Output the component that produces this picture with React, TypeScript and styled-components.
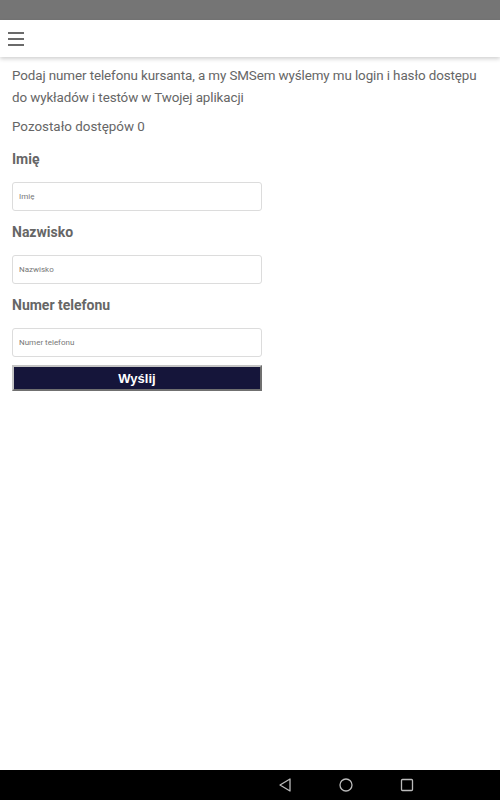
import React from "react";
import styled, { createGlobalStyle } from "styled-components";

const Global = createGlobalStyle`
  html, body { margin: 0; padding: 0; background: #fff; }
  body { font-family: Roboto, "Noto Sans", sans-serif; }
  #root { height: 800px; }
`;

const Screen = styled.div`
  width: 500px;
  height: 800px;
  display: flex;
  flex-direction: column;
  overflow: hidden;
`;

const StatusBar = styled.div`
  height: 20px;
  background: #757575;
  flex-shrink: 0;
`;

const Header = styled.div`
  height: 37px;
  background: #fff;
  display: flex;
  align-items: center;
  padding-left: 8px;
  box-shadow: 0 2px 4px rgba(0, 0, 0, 0.18);
  position: relative;
  z-index: 1;
  flex-shrink: 0;
`;

const Burger = styled.div`
  width: 16px;
  display: flex;
  flex-direction: column;
  gap: 4px;
  span {
    display: block;
    height: 2px;
    background: #6a6a6a;
  }
`;

const Content = styled.div`
  flex: 1;
  padding: 8px 12px 0;
  color: #666;
`;

const Intro = styled.p`
  margin: 0;
  font-size: 13.4px;
  line-height: 22px;
  letter-spacing: -0.1px;
`;

const Remaining = styled.p`
  margin: 7px 0 0;
  font-size: 13.4px;
  line-height: 22px;
`;

const Label = styled.div`
  font-size: 14px;
  font-weight: 700;
  line-height: 20px;
  margin-top: 11px;
  margin-bottom: 13px;
`;

const Input = styled.input`
  box-sizing: border-box;
  display: block;
  width: 250px;
  height: 29px;
  border: 1px solid #dcdcdc;
  border-radius: 3px;
  padding: 0 6px;
  font-family: Roboto, sans-serif;
  font-size: 8px;
  color: #666;
  outline: none;
  &::placeholder { color: #777; }
`;

const Button = styled.button`
  box-sizing: border-box;
  display: block;
  width: 250px;
  height: 26px;
  margin-top: 8px;
  background: #15153a;
  border: 2px outset #c4c4c4;
  color: #fff;
  font-family: "Liberation Sans", Arial, sans-serif;
  font-size: 13px;
  font-weight: 700;
  padding: 0;
`;

const NavBar = styled.div`
  height: 30px;
  background: #000;
  display: flex;
  align-items: center;
  justify-content: flex-start;
  padding-left: 277px;
  gap: 45px;
  flex-shrink: 0;
`;

export default function App() {
  return (
    <Screen>
      <Global />
      <StatusBar />
      <Header>
        <Burger>
          <span />
          <span />
          <span />
        </Burger>
      </Header>
      <Content>
        <Intro>
          Podaj numer telefonu kursanta, a my SMSem wyślemy mu login i hasło dostępu do wykładów i testów w Twojej aplikacji
        </Intro>
        <Remaining>Pozostało dostępów 0</Remaining>
        <Label>Imię</Label>
        <Input placeholder="Imię" />
        <Label>Nazwisko</Label>
        <Input placeholder="Nazwisko" />
        <Label>Numer telefonu</Label>
        <Input placeholder="Numer telefonu" />
        <Button>Wyślij</Button>
      </Content>
      <NavBar>
        <svg width="16" height="16" viewBox="0 0 16 16">
          <path d="M13 2 L3 8 L13 14 Z" fill="none" stroke="#bbb" strokeWidth="1.3" strokeLinejoin="round" />
        </svg>
        <svg width="16" height="16" viewBox="0 0 16 16">
          <circle cx="8" cy="8" r="6" fill="none" stroke="#bbb" strokeWidth="1.3" />
        </svg>
        <svg width="16" height="16" viewBox="0 0 16 16">
          <rect x="2.5" y="2.5" width="11" height="11" rx="1" fill="none" stroke="#bbb" strokeWidth="1.3" />
        </svg>
      </NavBar>
    </Screen>
  );
}
